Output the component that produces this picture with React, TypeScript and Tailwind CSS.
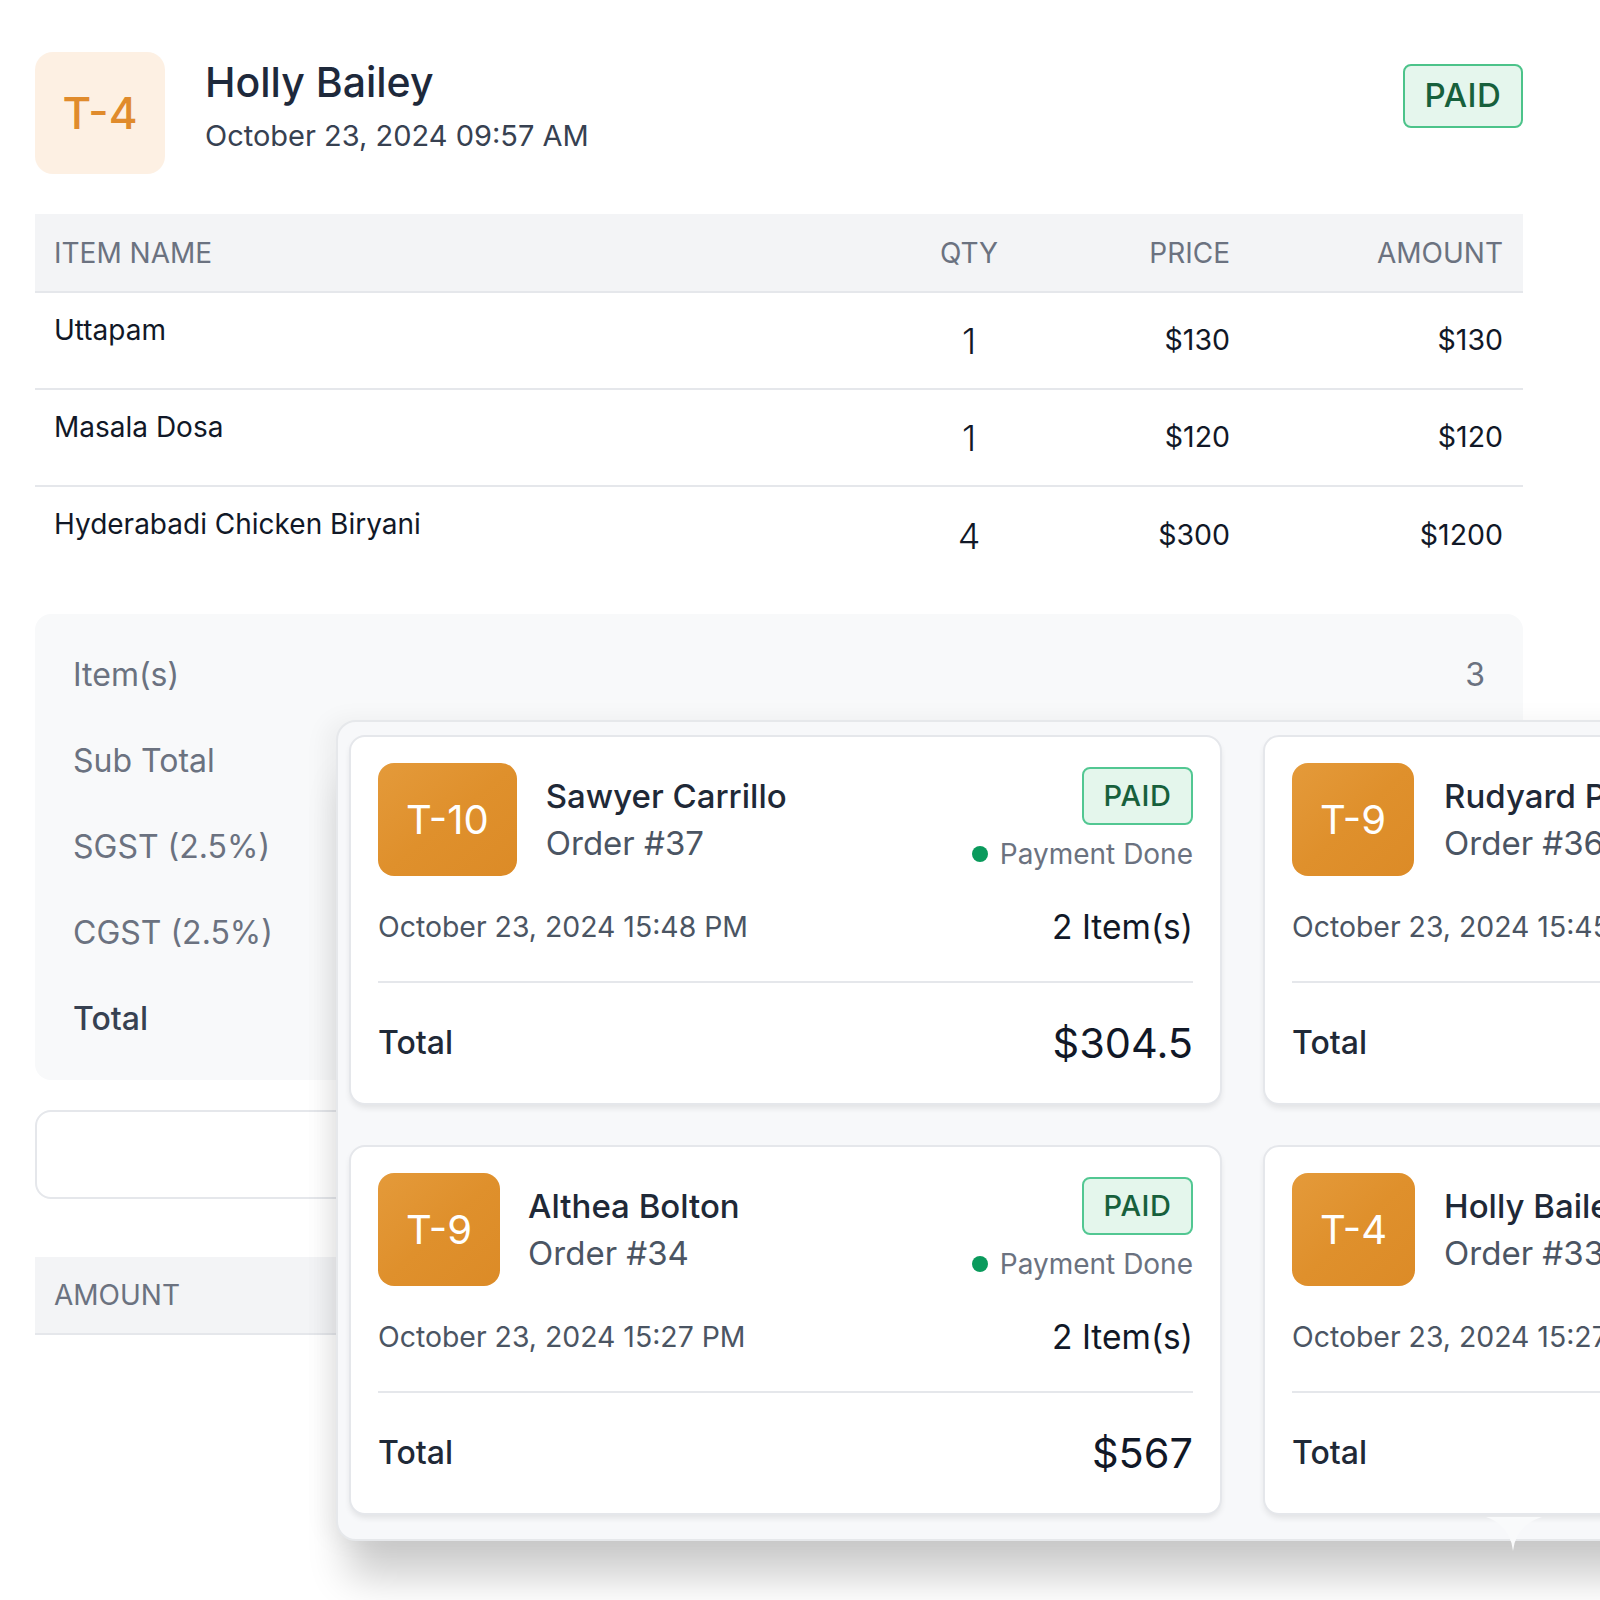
import React from "react";

type Order = {
  table: string;
  name: string;
  order: string;
  date: string;
  items: string;
  total: string;
  gap: string;
};

const orders: Order[] = [
  { table: "T-10", name: "Sawyer Carrillo", order: "Order #37", date: "October 23, 2024 15:48 PM", items: "2 Item(s)", total: "$304.5", gap: "ml-[29px]" },
  { table: "T-9", name: "Rudyard Pierce", order: "Order #36", date: "October 23, 2024 15:45 PM", items: "2 Item(s)", total: "$409.5", gap: "ml-[30px]" },
  { table: "T-9", name: "Althea Bolton", order: "Order #34", date: "October 23, 2024 15:27 PM", items: "2 Item(s)", total: "$567", gap: "ml-[28px]" },
  { table: "T-4", name: "Holly Bailey", order: "Order #33", date: "October 23, 2024 15:27 PM", items: "3 Item(s)", total: "$1522.5", gap: "ml-[29px]" },
];

const rows = [
  { name: "Uttapam", qty: "1", price: "$130", amount: "$130" },
  { name: "Masala Dosa", qty: "1", price: "$120", amount: "$120" },
  { name: "Hyderabadi Chicken Biryani", qty: "4", price: "$300", amount: "$1200" },
];

function OrderCard({ o }: { o: Order }) {
  return (
    <div className="w-[873px] h-[370px] rounded-[16px] border-2 border-[#e5e7eb] bg-white shadow-[0_4px_6px_-1px_rgba(0,0,0,0.09)] px-[27px] pt-[26px] flex flex-col">
      <div className="flex items-center">
        <div className="h-[113px] px-[28px] rounded-[16px] bg-linear-to-br from-[#e49a3a] via-[#df902c] to-[#dc8b27] flex items-center justify-center">
          <span className="text-[40px] leading-none text-white">{o.table}</span>
        </div>
        <div className={`${o.gap} flex flex-col`}>
          <span className="text-[33px] leading-[44px] font-medium text-[#1f2937] whitespace-nowrap">{o.name}</span>
          <span className="mt-[3px] text-[33px] leading-[44px] text-[#4b5563] whitespace-nowrap">{o.order}</span>
        </div>
        <div className="ml-auto flex flex-col items-end">
          <div className="w-[111px] h-[58px] rounded-[8px] border-2 border-[#52c792] bg-[#e4f6ec] flex items-center justify-center">
            <span className="text-[29px] font-medium text-[#17603c] tracking-[0.5px]">PAID</span>
          </div>
          <div className="mt-[11px] h-[36px] flex items-center gap-[12px]">
            <span className="w-[16px] h-[16px] rounded-full bg-[#0a9a5c]"></span>
            <span className="text-[28px] text-[#6b7280] whitespace-nowrap">Payment Done</span>
          </div>
        </div>
      </div>
      <div className="mt-[31px] h-[40px] flex items-center justify-between">
        <span className="text-[28.4px] text-[#4b5563] whitespace-nowrap">{o.date}</span>
        <span className="text-[33.5px] text-[#111827] whitespace-nowrap">{o.items}</span>
      </div>
      <div className="mt-[34px] h-[2px] bg-[#e5e7eb]"></div>
      <div className="flex-1 flex items-center justify-between">
        <span className="text-[32px] font-medium text-[#1f2937]">Total</span>
        <span className="text-[41.5px] text-[#111827]">{o.total}</span>
      </div>
    </div>
  );
}

export default function App() {
  return (
    <div className="relative w-[1600px] h-[1600px] overflow-hidden bg-white font-['Inter',sans-serif]">
      <div className="ml-[35px] w-[1488px] pt-[52px]">
        {/* Header */}
        <div className="flex items-start justify-between">
          <div className="flex items-start gap-[40px]">
            <div className="w-[130px] h-[122px] rounded-[18px] bg-[#fdf0e3] flex items-center justify-center">
              <span className="text-[44px] font-medium text-[#e08b2c]">T-4</span>
            </div>
            <div className="flex flex-col pt-[8px]">
              <span className="text-[41px] leading-[44px] font-medium text-[#1e293b]">Holly Bailey</span>
              <span className="mt-[14px] text-[29px] leading-[36px] text-[#374151]">October 23, 2024 09:57 AM</span>
            </div>
          </div>
          <div className="mt-[12px] w-[120px] h-[64px] rounded-[8px] border-2 border-[#4cc38a] bg-[#e5f6ed] flex items-center justify-center">
            <span className="text-[33px] font-medium text-[#17603c] tracking-[0.5px]">PAID</span>
          </div>
        </div>

        {/* Table */}
        <div className="mt-[40px]">
          <div className="h-[79px] bg-[#f3f4f6] border-b-2 border-[#e5e7eb] px-[19px] grid grid-cols-[840px_150px_186px_273px] items-center text-[28px] text-[#6b7280] uppercase">
            <span>Item Name</span>
            <span className="text-center">Qty</span>
            <span className="text-right">Price</span>
            <span className="text-right">Amount</span>
          </div>
          {rows.map((r, i) => (
            <div
              key={r.name}
              className={`h-[97px] px-[19px] grid grid-cols-[840px_150px_186px_273px] items-center ${i < rows.length - 1 ? "border-b-2 border-[#e5e7eb]" : ""}`}
            >
              <span className="self-start pt-[20px] text-[28px] leading-[34px] text-[#111827]">{r.name}</span>
              <span className="text-center text-[36px] font-light text-[#111827]">{r.qty}</span>
              <span className="text-right text-[28.5px] text-[#111827]">{r.price}</span>
              <span className="text-right text-[28.5px] text-[#111827]">{r.amount}</span>
            </div>
          ))}
        </div>

        {/* Summary (values on the right are covered by the popover) */}
        <div className="mt-[30px] rounded-[16px] bg-[#f8f9fa] px-[38px] pt-[18px] pb-[18px]">
          <div className="h-[86px] flex items-center justify-between text-[32px] text-[#6b7280]">
            <span>Item(s)</span>
            <span>3</span>
          </div>
          {["Sub Total", "SGST (2.5%)", "CGST (2.5%)"].map((l) => (
            <div key={l} className="h-[86px] flex items-center text-[32px] text-[#6b7280]">
              <span>{l}</span>
            </div>
          ))}
          <div className="h-[86px] flex items-center text-[32px] font-medium text-[#374151]">
            <span>Total</span>
          </div>
        </div>

        <div className="mt-[30px] h-[89px] rounded-[16px] border-2 border-[#e5e7eb] bg-white"></div>

        <div className="mt-[58px] h-[78px] bg-[#f3f4f6] border-b-2 border-[#e5e7eb] px-[19px] flex items-center text-[28px] text-[#6b7280]">
          <span>AMOUNT</span>
        </div>
      </div>

      {/* Orders popover */}
      <div className="absolute left-[336px] top-[720px] w-[1900px] rounded-[20px] border-2 border-[#e6e8eb] bg-[#f7f8fa] pl-[11px] pt-[13px] pb-[24px] shadow-[0_48px_40px_-12px_rgba(0,0,0,0.2),-10px_0_24px_rgba(0,0,0,0.05)]">
        <div className="grid grid-cols-[873px_873px] gap-x-[41px] gap-y-[40px]">
          {orders.map((o) => (
            <OrderCard key={o.order} o={o} />
          ))}
        </div>
      </div>
      <svg className="absolute left-[1486px] top-[1517px]" width="56" height="34" viewBox="0 0 56 34">
        <path d="M0 0 H56 Q30 8 27 34 Q24 8 0 0 Z" fill="#f9fafb" />
      </svg>
    </div>
  );
}
